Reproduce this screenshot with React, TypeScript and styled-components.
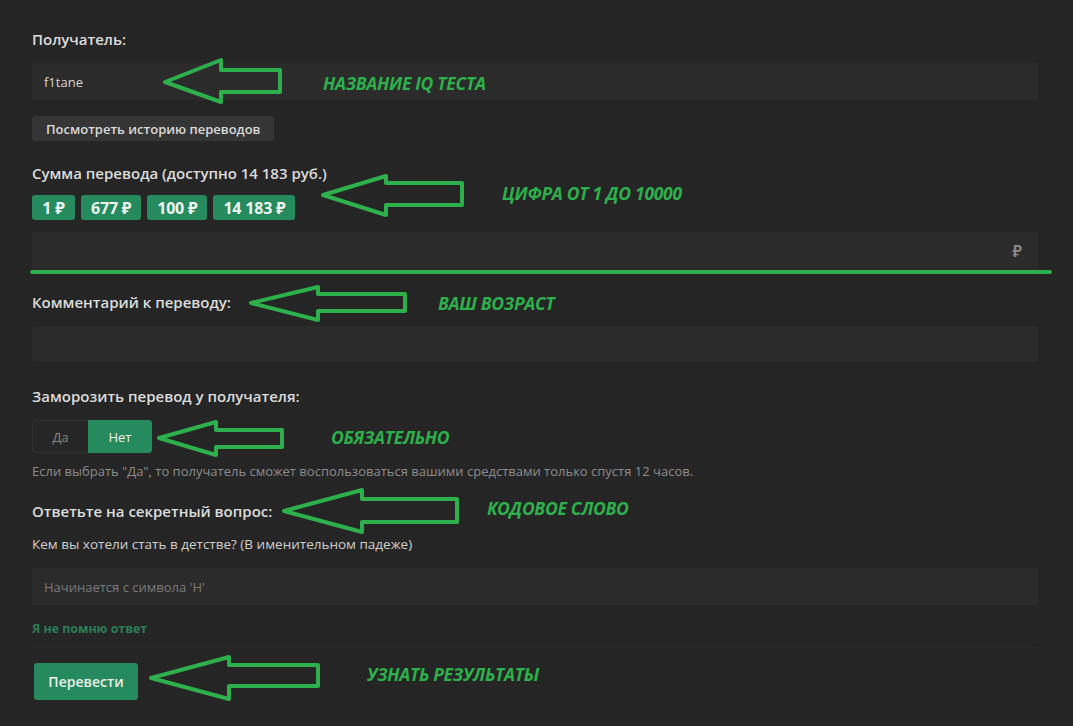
import { FunctionComponent } from "react";
import styled, { createGlobalStyle } from "styled-components";

const GREEN = "#258b5e";
const MARK = "#2db04c";

const GlobalStyle = createGlobalStyle`
    html, body {
        margin: 0;
        padding: 0;
        background: #252525;
    }
    body {
        font-family: "Open Sans", "Noto Sans", sans-serif;
        color: #d9d9d9;
    }
`;

const Page = styled.div`
    position: relative;
    width: 1073px;
    height: 726px;
    overflow: hidden;
    background: #252525;
`;

const Form = styled.form`
    display: flex;
    flex-direction: column;
    align-items: flex-start;
    padding: 29px 35px 0 32px;
`;

const Label = styled.div<{ $top?: number }>`
    margin-top: ${p => p.$top ?? 0}px;
    font-size: 15px;
    line-height: 20px;
    font-weight: 600;
    color: #dcdcdc;
`;

const InputBox = styled.div<{ $top: number; $height: number }>`
    align-self: stretch;
    display: flex;
    align-items: center;
    justify-content: space-between;
    margin-top: ${p => p.$top}px;
    height: ${p => p.$height}px;
    padding: 0 12px;
    background: #2b2b2b;
    border-radius: 2px;
    font-size: 13px;
    color: #d6d6d6;
`;

const Placeholder = styled.span`
    color: #7a7a7a;
`;

const Currency = styled.span`
    margin-right: 4px;
    font-size: 16px;
    font-weight: 600;
    color: #8a8a8a;
`;

const GreyButton = styled.button`
    margin-top: 16px;
    height: 25px;
    padding: 0 14px;
    border: none;
    border-radius: 3px;
    background: #353535;
    color: #dadada;
    font-family: inherit;
    font-size: 13px;
    font-weight: 600;
`;

const Chips = styled.div`
    display: flex;
    gap: 6px;
    margin-top: 12px;
`;

const Chip = styled.button`
    min-width: 43px;
    height: 25px;
    padding: 0 10px;
    border: none;
    border-radius: 3px;
    background: ${GREEN};
    color: #eef5f0;
    font-family: inherit;
    font-size: 16px;
    font-weight: 700;
    letter-spacing: -0.2px;
`;

const Toggle = styled.div`
    display: flex;
    margin-top: 14px;
    height: 33px;
    border-radius: 3px;
    overflow: hidden;
`;

const ToggleOption = styled.button<{ $active?: boolean; $width: number }>`
    width: ${p => p.$width}px;
    border: ${p => (p.$active ? "none" : "1px solid #2f2f2f")};
    border-right: none;
    border-radius: ${p => (p.$active ? "0 3px 3px 0" : "3px 0 0 3px")};
    background: ${p => (p.$active ? GREEN : "#262626")};
    color: ${p => (p.$active ? "#f2f2f2" : "#858585")};
    font-family: inherit;
    font-size: 13px;
`;

const Hint = styled.div<{ $top: number; $color?: string; $size?: number }>`
    margin-top: ${p => p.$top}px;
    font-size: ${p => p.$size ?? 13}px;
    line-height: 18px;
    color: ${p => p.$color ?? "#8c8c8c"};
`;

const ForgotLink = styled.a`
    margin-top: 15px;
    font-size: 12.4px;
    line-height: 18px;
    font-weight: 700;
    color: #2b7d57;
    text-decoration: none;
`;

const Divider = styled.div`
    align-self: stretch;
    margin-top: 9px;
    height: 1px;
    background: #2a2a2a;
`;

const SubmitButton = styled.button`
    margin: 15px 0 0 2px;
    width: 104px;
    height: 37px;
    border: none;
    border-radius: 3px;
    background: ${GREEN};
    color: #e9efe9;
    font-family: inherit;
    font-size: 14px;
    font-weight: 600;
`;

/* annotation layer drawn on top of the screenshot */
const Overlay = styled.div`
    position: absolute;
    inset: 0;
    pointer-events: none;
`;

const Note = styled.span<{ $x: number; $y: number }>`
    position: absolute;
    left: ${p => p.$x}px;
    top: ${p => p.$y - 12}px;
    line-height: 24px;
    font-family: "Open Sans", sans-serif;
    font-style: italic;
    font-weight: 700;
    font-size: 17.5px;
    letter-spacing: -0.3px;
    color: ${MARK};
    white-space: nowrap;
`;

interface Arrow {
    tip: [number, number];
    head: number;
    top: number;
    bottom: number;
    end: number;
    shaft: [number, number];
}

const arrows: Arrow[] = [
    { tip: [165, 82], head: 221, top: 60, bottom: 102, end: 280, shaft: [70, 92] },
    { tip: [323, 195], head: 386, top: 176, bottom: 215, end: 462, shaft: [183, 205] },
    { tip: [251, 303], head: 318, top: 287, bottom: 320, end: 405, shaft: [294, 311] },
    { tip: [159, 438], head: 216, top: 422, bottom: 455, end: 282, shaft: [430, 447] },
    { tip: [284, 511], head: 362, top: 490, bottom: 532, end: 457, shaft: [499, 522] },
    { tip: [151, 678], head: 229, top: 657, bottom: 699, end: 318, shaft: [665, 686] },
];

const notes = [
    { x: 323, y: 83, text: "НАЗВАНИЕ IQ ТЕСТА" },
    { x: 502, y: 193, text: "ЦИФРА ОТ 1 ДО 10000" },
    { x: 438, y: 303, text: "ВАШ ВОЗРАСТ" },
    { x: 331, y: 437, text: "ОБЯЗАТЕЛЬНО" },
    { x: 487, y: 508, text: "КОДОВОЕ СЛОВО" },
    { x: 367, y: 674, text: "УЗНАТЬ РЕЗУЛЬТАТЫ" },
];

const arrowPoints = (a: Arrow) => [
    a.tip,
    [a.head, a.top],
    [a.head, a.shaft[0]],
    [a.end, a.shaft[0]],
    [a.end, a.shaft[1]],
    [a.head, a.shaft[1]],
    [a.head, a.bottom],
].map(p => p.join(",")).join(" ");

const Annotations: FunctionComponent = () => (
    <Overlay>
        <svg width="1073" height="726" viewBox="0 0 1073 726">
            <line x1="32" y1="272" x2="1050" y2="272" stroke={MARK} strokeWidth="4" strokeLinecap="round" />
            {arrows.map((a, i) => (
                <polygon key={i} points={arrowPoints(a)} fill="none" stroke={MARK} strokeWidth="4" strokeLinejoin="round" />
            ))}
        </svg>
        {notes.map(n => (
            <Note key={n.text} $x={n.x} $y={n.y}>{n.text}</Note>
        ))}
    </Overlay>
);

const App: FunctionComponent = () => {

    const amounts = ["1 ₽", "677 ₽", "100 ₽", "14 183 ₽"];

    return (
        <Page>
            <GlobalStyle />
            <Form onSubmit={e => e.preventDefault()}>
                <Label>Получатель:</Label>
                <InputBox $top={14} $height={37}>f1tane</InputBox>
                <GreyButton type="button">Посмотреть историю переводов</GreyButton>

                <Label $top={22}>Сумма перевода (доступно 14 183 руб.)</Label>
                <Chips>
                    {amounts.map(a => <Chip key={a} type="button">{a}</Chip>)}
                </Chips>
                <InputBox $top={12} $height={38}>
                    <span />
                    <Currency>₽</Currency>
                </InputBox>

                <Label $top={22}>Комментарий к переводу:</Label>
                <InputBox $top={14} $height={36} />

                <Label $top={24}>Заморозить перевод у получателя:</Label>
                <Toggle>
                    <ToggleOption type="button" $width={56}>Да</ToggleOption>
                    <ToggleOption type="button" $width={64} $active>Нет</ToggleOption>
                </Toggle>
                <Hint $top={9}>Если выбрать "Да", то получатель сможет воспользоваться вашими средствами только спустя 12 часов.</Hint>

                <Label $top={21}>Ответьте на секретный вопрос:</Label>
                <Hint $top={14} $size={13.5} $color="#cfcfcf">Кем вы хотели стать в детстве? (В именительном падеже)</Hint>
                <InputBox $top={15} $height={37}>
                    <Placeholder>Начинается с символа 'Н'</Placeholder>
                </InputBox>
                <ForgotLink href="#">Я не помню ответ</ForgotLink>
                <Divider />
                <SubmitButton type="submit">Перевести</SubmitButton>
            </Form>
            <Annotations />
        </Page>
    );
}

export default App;
